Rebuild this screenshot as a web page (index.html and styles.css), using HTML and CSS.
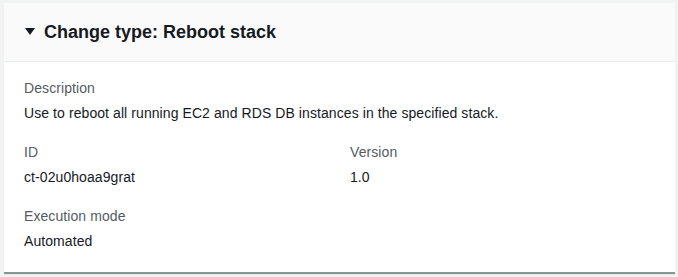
FILE: index.html
```html
<!DOCTYPE html>
<html lang="en">
	<head>
		<meta charset="utf-8" />
		<title>Change type</title>
		<meta name="viewport" content="width=device-width, initial-scale=1" />
		<link rel="stylesheet" href="styles.css">
	</head>
	<body>
		<div class="card">
			<div class="card-header">
				<span class="caret"></span>
				<h2>Change type: Reboot stack</h2>
			</div>
			<div class="card-body">
				<div class="field">
					<div class="label">Description</div>
					<div class="value">Use to reboot all running EC2 and RDS DB instances in the specified stack.</div>
				</div>
				<div class="columns">
					<div class="field">
						<div class="label">ID</div>
						<div class="value">ct-02u0hoaa9grat</div>
					</div>
					<div class="field">
						<div class="label">Version</div>
						<div class="value">1.0</div>
					</div>
				</div>
				<div class="field">
					<div class="label">Execution mode</div>
					<div class="value">Automated</div>
				</div>
			</div>
		</div>
	</body>
</html>
```

FILE: styles.css
```css
* { box-sizing: border-box; }

html {
	font: 14px/20px "Liberation Sans", Arial, sans-serif;
	letter-spacing: 0.08px;
	color: #16191f;
}

body {
	margin: 0;
	padding: 3px 3px 0 4px;
	background: #f2f3f3;
	min-height: 100vh;
}

.card {
	background: #fff;
	border-bottom: 2px solid #879596;
	box-shadow: 0 1px 1px rgba(0, 0, 0, 0.05);
}

.card-header {
	display: flex;
	align-items: center;
	gap: 9px;
	height: 59px;
	padding: 0 20px 1px 21px;
	background: #fafafa;
	border-bottom: 1px solid #eaeded;
}

.caret {
	width: 0;
	height: 0;
	border-left: 5px solid transparent;
	border-right: 5px solid transparent;
	border-top: 7px solid #16191f;
}

.card-header h2 {
	margin: 0;
	font-size: 18px;
	line-height: 22px;
	font-weight: 700;
	letter-spacing: 0;
}

.card-body {
	padding: 16px 20px 21px 20px;
}

.field + .field,
.columns,
.columns + .field {
	margin-top: 19px;
}

.columns {
	display: grid;
	grid-template-columns: 326px 1fr;
}

.columns .field + .field {
	margin-top: 0;
}

.label {
	color: #545b64;
}

.value {
	margin-top: 5px;
}
```
